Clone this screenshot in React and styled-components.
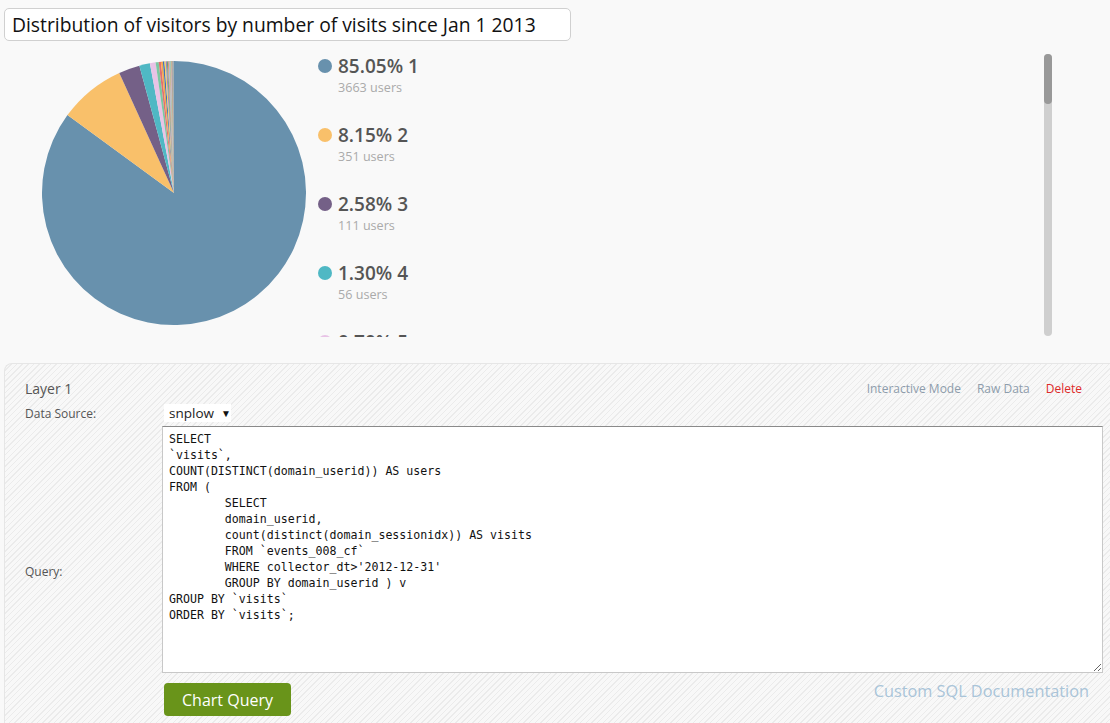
import React from "react";
import styled, { createGlobalStyle } from "styled-components";

const GlobalStyle = createGlobalStyle`
  html, body {
    margin: 0;
    padding: 0;
    background: #f9f9f9;
    overflow: hidden;
    font-family: "Open Sans", "Noto Sans", sans-serif;
  }
  * { box-sizing: border-box; }
`;

const COLORS = [
  "#6891ad", "#f9c06a", "#746087", "#4fb8c4", "#e8c3e6", "#7cc7a2", "#e07070",
  "#f5a54a", "#3f72b5", "#f2d45c", "#a47bc6", "#5aa469", "#d98b7a", "#8fb8de",
  "#c9a26b", "#6cc1b6", "#e58fb4", "#9aa84c", "#b5655f", "#5f8fc9", "#e8b23a",
  "#8c6bb1", "#55a0a8",
];

const COUNTS = [3663, 351, 111, 56, 30, 16, 12, 10, 8, 7, 6, 5, 5, 4, 4, 3, 3, 3, 2, 2, 2, 2, 2];
const TOTAL = COUNTS.reduce((a, b) => a + b, 0);
const DATA = COUNTS.map((c, i) => ({
  visits: i + 1,
  users: c,
  pct: ((c / TOTAL) * 100).toFixed(2),
  color: COLORS[i % COLORS.length],
}));

const QUERY = `SELECT
\`visits\`,
COUNT(DISTINCT(domain_userid)) AS users
FROM (
\tSELECT
\tdomain_userid,
\tcount(distinct(domain_sessionidx)) AS visits
\tFROM \`events_008_cf\`
\tWHERE collector_dt>'2012-12-31'
\tGROUP BY domain_userid ) v
GROUP BY \`visits\`
ORDER BY \`visits\`;`;

const Page = styled.div`
  padding: 8px 0 0 4px;
  width: 1110px;
`;

const TitleInput = styled.input`
  display: block;
  width: 567px;
  height: 33px;
  border: 1px solid #d0d0d0;
  border-radius: 5px;
  background: #fff;
  padding: 0 7px;
  font-family: "Open Sans", sans-serif;
  font-size: 19.3px;
  color: #111;
  outline: none;
`;

const ChartRow = styled.div`
  display: flex;
  align-items: flex-start;
  margin-top: 12px;
  height: 284px;
  padding-right: 58px;
`;

const PieWrap = styled.div`
  padding: 8px 0 0 38px;
  flex: none;
`;

const LegendArea = styled.div`
  flex: 1;
  display: flex;
  margin-left: 12px;
  margin-top: 1px;
  height: 283px;
`;

const LegendClip = styled.div`
  flex: 1;
  overflow: hidden;
`;

const ScrollTrack = styled.div`
  width: 8px;
  height: 282px;
  border-radius: 4px;
  background: #cfcfcf;
  flex: none;
`;

const ScrollThumb = styled.div`
  width: 8px;
  height: 50px;
  border-radius: 4px;
  background: #999;
`;

const LegendItem = styled.div`
  display: grid;
  grid-template-columns: 14px auto;
  column-gap: 6px;
  align-items: center;
  margin-bottom: 26px;
`;

const Dot = styled.span`
  width: 14px;
  height: 14px;
  border-radius: 50%;
  background: ${(p) => p.$color};
`;

const LegendTitle = styled.div`
  font-size: 19px;
  font-weight: 600;
  line-height: 24px;
  color: #555;
`;

const LegendSub = styled.div`
  grid-column: 2;
  font-size: 12.6px;
  line-height: 18px;
  padding-top: 1px;
  color: #aaa;
`;

const Panel = styled.div`
  margin-top: 26px;
  width: 1108px;
  border: 1px solid #e6e6e6;
  border-right: none;
  border-radius: 8px 0 0 0;
  padding: 14px 6px 20px 20px;
  background-color: #f7f7f7;
  background-image: repeating-linear-gradient(
    135deg,
    #ebebeb 0px,
    #ebebeb 1px,
    #f8f8f8 1px,
    #f8f8f8 4px
  );
`;

const PanelHeader = styled.div`
  display: flex;
  align-items: center;
  justify-content: space-between;
  height: 20px;
  padding-right: 24px;
`;

const LayerTitle = styled.div`
  font-size: 14px;
  color: #555;
`;

const Links = styled.div`
  display: flex;
  gap: 16px;
`;

const LinkText = styled.span`
  font-size: 12px;
  color: ${(p) => (p.$danger ? "#dd2a2a" : "#8d9cab")};
`;

const FormGrid = styled.div`
  display: grid;
  grid-template-columns: 137px 1fr;
  margin-top: 6px;
  row-gap: 4px;
`;

const Label = styled.div`
  font-size: 12px;
  color: #555;
  align-self: center;
`;

const SelectBox = styled.div`
  margin-left: 2px;
  width: 67px;
  height: 18px;
  background: #fff;
  display: flex;
  align-items: center;
  padding-left: 5px;
  font-size: 13.5px;
  color: #222;
  gap: 7px;
  span { font-size: 10px; color: #111; }
`;

const QueryCell = styled.div`
  display: flex;
  flex-direction: column;
`;

const QueryArea = styled.textarea`
  display: block;
  width: 941px;
  height: 247px;
  border: 1px solid #c8c8c8;
  border-top-color: #8a8a8a;
  background: #fff;
  padding: 4px 6px;
  font-family: "DejaVu Sans Mono", monospace;
  font-size: 11.6px;
  line-height: 16px;
  color: #111;
  tab-size: 8;
  outline: none;
  resize: both;
`;

const Actions = styled.div`
  display: flex;
  justify-content: space-between;
  align-items: flex-start;
  margin-top: 10px;
  padding-right: 17px;
`;

const ChartButton = styled.button`
  margin-left: 2px;
  width: 127px;
  height: 33px;
  border: none;
  border-radius: 4px;
  background: #69941a;
  color: #fff;
  font-family: "Open Sans", sans-serif;
  font-size: 16px;
`;

const DocLink = styled.span`
  font-size: 16.3px;
  color: #a9c4d8;
  line-height: 20px;
  margin-top: -2px;
`;

function Pie() {
  const cx = 132;
  const cy = 132;
  const r = 132;
  let a = 0;
  const paths = DATA.map((d) => {
    const start = a;
    const end = a + (d.users / TOTAL) * Math.PI * 2;
    a = end;
    const x1 = cx + r * Math.sin(start);
    const y1 = cy - r * Math.cos(start);
    const x2 = cx + r * Math.sin(end);
    const y2 = cy - r * Math.cos(end);
    const large = end - start > Math.PI ? 1 : 0;
    return (
      <path
        key={d.visits}
        d={`M${cx},${cy} L${x1},${y1} A${r},${r} 0 ${large} 1 ${x2},${y2} Z`}
        fill={d.color}
      />
    );
  });
  return (
    <svg width="264" height="264" viewBox="0 0 264 264">
      {paths}
    </svg>
  );
}

export default function App() {
  return (
    <>
      <GlobalStyle />
      <Page>
        <TitleInput
          defaultValue="Distribution of visitors by number of visits since Jan 1 2013"
          readOnly
        />
        <ChartRow>
          <PieWrap>
            <Pie />
          </PieWrap>
          <LegendArea>
            <LegendClip>
              {DATA.map((d) => (
                <LegendItem key={d.visits}>
                  <Dot $color={d.color} />
                  <LegendTitle>
                    {d.pct}% {d.visits}
                  </LegendTitle>
                  <LegendSub>{d.users} users</LegendSub>
                </LegendItem>
              ))}
            </LegendClip>
            <ScrollTrack>
              <ScrollThumb />
            </ScrollTrack>
          </LegendArea>
        </ChartRow>
        <Panel>
          <PanelHeader>
            <LayerTitle>Layer 1</LayerTitle>
            <Links>
              <LinkText>Interactive Mode</LinkText>
              <LinkText>Raw Data</LinkText>
              <LinkText $danger>Delete</LinkText>
            </Links>
          </PanelHeader>
          <FormGrid>
            <Label>Data Source:</Label>
            <SelectBox>
              snplow <span>▼</span>
            </SelectBox>
            <Label>Query:</Label>
            <QueryCell>
              <QueryArea defaultValue={QUERY} readOnly spellCheck={false} />
              <Actions>
                <ChartButton>Chart Query</ChartButton>
                <DocLink>Custom SQL Documentation</DocLink>
              </Actions>
            </QueryCell>
          </FormGrid>
        </Panel>
      </Page>
    </>
  );
}
